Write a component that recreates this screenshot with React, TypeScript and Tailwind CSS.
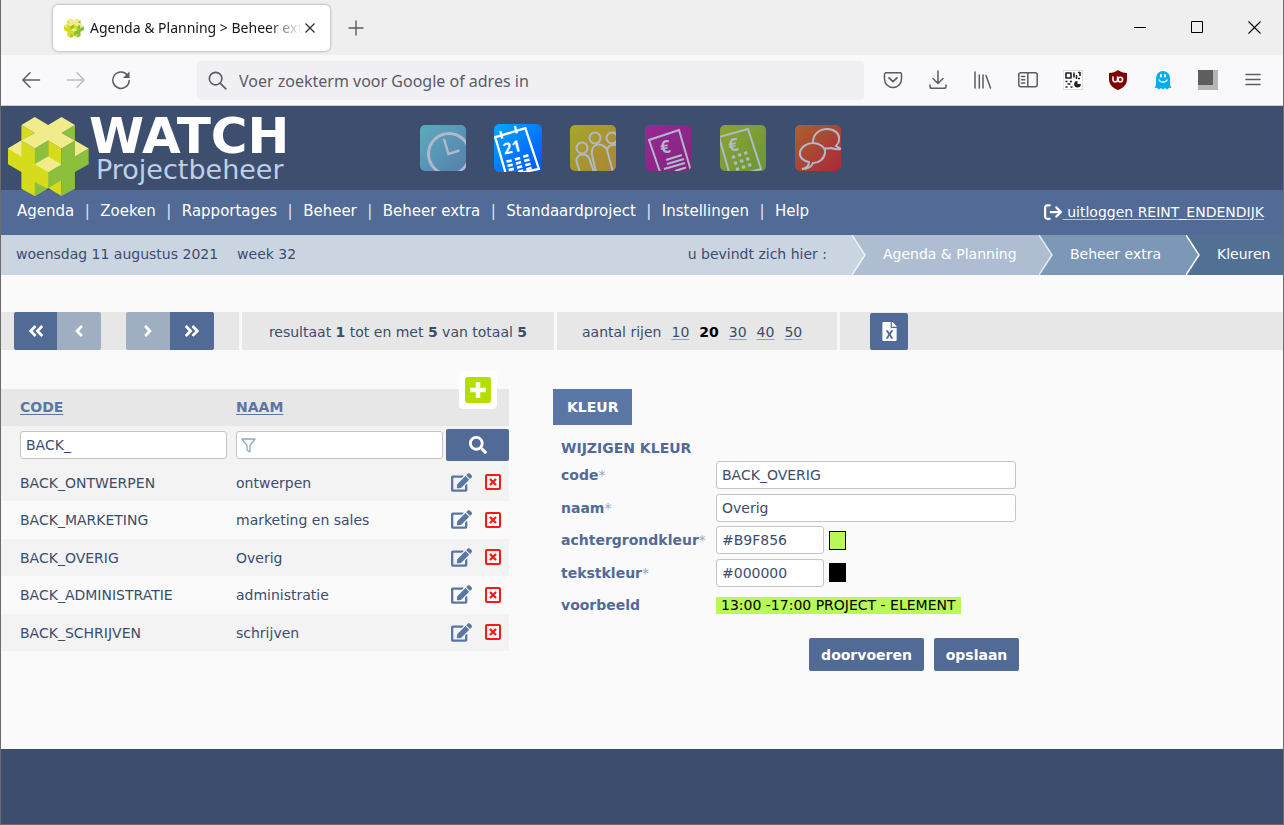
import { useState } from "react";
import type { ReactNode } from "react";
import {
  FaAngleDoubleLeft,
  FaAngleDoubleRight,
  FaAngleLeft,
  FaAngleRight,
  FaEdit,
  FaFileExcel,
  FaSearch,
} from "react-icons/fa";
import { FaArrowRightFromBracket } from "react-icons/fa6";

const menu = [
  "Agenda",
  "Zoeken",
  "Rapportages",
  "Beheer",
  "Beheer extra",
  "Standaardproject",
  "Instellingen",
  "Help",
];

const kleuren = [
  { code: "BACK_ONTWERPEN", naam: "ontwerpen" },
  { code: "BACK_MARKETING", naam: "marketing en sales" },
  { code: "BACK_OVERIG", naam: "Overig" },
  { code: "BACK_ADMINISTRATIE", naam: "administratie" },
  { code: "BACK_SCHRIJVEN", naam: "schrijven" },
];

const inputClass =
  "border border-[#c4c4c4] rounded-[3px] bg-white text-[#3b4d6d] px-[5px] h-7 leading-5 outline-none focus:border-[#5976a4]";

function Logo({ className }: { className?: string }) {
  return (
    <svg viewBox="24 36 242 236" className={className} aria-hidden="true">
      <path
        fill="#d6dc1c"
        d="M24 130 64 106 104 130 144 154 144 106 184 130 184 272 144 248 104 272 64 250 64 200 24 177ZM64 60 104 84 64 108Z"
      />
      <path
        fill="#8cbf3c"
        d="M104 130 144 106 144 154 104 177ZM184 130 224 106 224 154 265 130 265 177 224 200 224 250 184 272ZM184 177 184 225 144 248 144 200ZM224 60 184 84 224 106ZM104 230 142 250 104 272Z"
      />
      <path
        fill="#f0ec8c"
        d="M104 36 144 60 184 36 224 60 184 84 224 106 184 130 144 106 104 130 64 106 104 84 64 60ZM24 130 64 106 64 154ZM224 106 265 130 224 154ZM104 177 144 154 184 177 144 200Z"
      />
    </svg>
  );
}

function ToolButton({ label, children }: { label: string; children: ReactNode }) {
  return (
    <button aria-label={label} className="w-[45px] h-9 flex items-center justify-center shrink-0">
      <svg
        viewBox="0 0 20 20"
        className="w-5 h-5"
        fill="none"
        stroke="#5b5b66"
        strokeWidth="1.5"
        strokeLinecap="round"
        strokeLinejoin="round"
      >
        {children}
      </svg>
    </button>
  );
}

function Browser() {
  return (
    <>
      <div className="h-[55px] bg-[#efefef] flex items-center pl-[52px] font-['Noto_Sans','Open_Sans',sans-serif]">
        <div className="w-[277px] h-[46px] bg-white rounded-[5px] shadow-[0_0_3px_#90909c] flex items-center pl-[11px] pr-3 text-[14px] text-[#15141a]">
          <Logo className="w-5 h-5 shrink-0" />
          <span className="ml-[6px] pt-px flex-1 whitespace-nowrap overflow-hidden [mask-image:linear-gradient(to_right,black_84%,transparent)]">
            Agenda &amp; Planning &gt; Beheer extra
          </span>
          <button aria-label="Tabblad sluiten" className="w-4 h-4 flex items-center justify-center">
            <svg viewBox="0 0 10 10" className="w-[10px] h-[10px]" stroke="#2b2a33" strokeWidth="1.2">
              <path d="M.5.5l9 9M9.5.5l-9 9" />
            </svg>
          </button>
        </div>
        <button aria-label="Nieuw tabblad" className="ml-[18px] w-4 h-4">
          <svg viewBox="0 0 16 16" className="w-4 h-4" stroke="#5b5b66" strokeWidth="1.4">
            <path d="M8 .5v15M.5 8h15" />
          </svg>
        </button>
        <div className="ml-auto flex">
          <button aria-label="Minimaliseren" className="w-[57px] h-8 flex items-center justify-center">
            <svg viewBox="0 0 13 13" className="w-[13px] h-[13px]" stroke="#000">
              <path d="M0 6.500h12" />
            </svg>
          </button>
          <button aria-label="Maximaliseren" className="w-[57px] h-8 flex items-center justify-center">
            <svg viewBox="0 0 13 13" className="w-[13px] h-[13px]" stroke="#000" fill="none">
              <path d="M.5.5h11v11H.5z" />
            </svg>
          </button>
          <button aria-label="Sluiten" className="w-[57px] h-8 flex items-center justify-center">
            <svg viewBox="0 0 13 13" className="w-[13px] h-[13px]" stroke="#000" strokeWidth="1.1">
              <path d="M.5.5l12 12M12.500.5l-12 12" />
            </svg>
          </button>
        </div>
      </div>

      <div className="h-[51px] bg-[#f9f9fb] border-b border-[#ccccd0] flex items-center pl-[7px] pr-2">
        <ToolButton label="Terug">
          <path d="M18.500 10H2M9 2.800 1.800 10 9 17.200" />
        </ToolButton>
        <ToolButton label="Vooruit">
          <path stroke="#bcbcc2" d="M1.500 10H18M11 2.800 18.200 10 11 17.200" />
        </ToolButton>
        <ToolButton label="Vernieuwen">
          <path d="M16.500 5.200A8.200 8.200 0 1 0 18.200 10.500" />
          <path fill="#5b5b66" stroke="none" d="M18.500 1.500v6.500H12z" />
        </ToolButton>
        <label className="ml-[54px] mr-[6px] flex-1 h-[39px] bg-[#f0f0f4] rounded-[4px] flex items-center pl-[11px]">
          <svg viewBox="0 0 20 20" className="w-[19px] h-[19px]" fill="none" stroke="#5b5b66" strokeWidth="1.7" strokeLinecap="round">
            <circle cx="8" cy="8" r="6.600" />
            <path d="M13 13l5.800 5.800" />
          </svg>
          <input
            aria-label="Adres"
            placeholder="Voer zoekterm voor Google of adres in"
            className="ml-3 pt-[2px] flex-1 bg-transparent outline-none text-base placeholder:text-[#5b5b66] font-['Noto_Sans','Open_Sans',sans-serif]"
          />
        </label>
        <ToolButton label="Pocket">
          <path d="M3 2.800h14a1.500 1.500 0 0 1 1.500 1.500V9a8.500 8.500 0 0 1-17 0V4.300A1.500 1.500 0 0 1 3 2.800z" />
          <path strokeWidth="1.800" d="M6 7.800l4 3.800 4-3.800" />
        </ToolButton>
        <ToolButton label="Downloads">
          <path d="M10 1v12M5 8.500l5 5 5-5M2 15v1.500A1.800 1.800 0 0 0 3.800 18.300h12.400A1.800 1.800 0 0 0 18 16.500V15" />
        </ToolButton>
        <ToolButton label="Bibliotheek">
          <path d="M2 2v16M6.300 5v13M10 5v13M13 5.500l4.500 12.500" />
        </ToolButton>
        <ToolButton label="Zijbalk">
          <rect x=".8" y="2.800" width="18.400" height="14" rx="2" />
          <path d="M9.800 3v13.500M3.500 6.500h3.200M3.500 9.800h3.200M3.500 13h3.200" />
        </ToolButton>
        <ToolButton label="QR-code">
          <rect x=".5" y=".5" width="19" height="19" fill="#fff" stroke="#dcdcdc" strokeWidth="1" />
          <path stroke="#222" strokeWidth="1.600" strokeLinecap="butt" d="M3 3h5v5H3zM11 2.500v5M13.500 5v4M17 2v4M15 8.500h2M2.500 11.500h2M7 11.500h2M4.500 14h3M2.500 17h2M7.500 17h2M15 2.500h2" />
          <circle cx="14.500" cy="14.300" r="3.300" fill="#222" stroke="none" />
          <path d="M14.500 14V10.500h4V14z" fill="#fff" stroke="none" />
        </ToolButton>
        <ToolButton label="uBlock Origin">
          <path fill="#800000" stroke="none" d="M10 0c2.500 2 5.500 2.800 9 3v6c0 6-4 9-9 11C5 18 1 15 1 9V3c3.500-.2 6.500-1 9-3z" />
          <path stroke="#fff" strokeWidth="1.600" d="M5 7v2.500a2.300 2.300 0 0 0 4.600 0V7" />
          <circle cx="12.300" cy="9.500" r="2.300" stroke="#fff" strokeWidth="1.600" />
        </ToolButton>
        <ToolButton label="Ghostery">
          <path fill="#00aef0" stroke="none" d="M3 8a7 7 0 0 1 14 0v7l1.500 3-2.500-.2-1.800 1.800-2.200-1.700L10 19.600 8 17.900l-2.200 1.700L4 17.800 1.500 18 3 15z" />
          <path stroke="#fff" strokeWidth="2" d="M8 5v1.500M12 5v1.500" />
          <path stroke="#fff" d="M6 10c1.500 3 6.500 3 8 0" />
        </ToolButton>
        <ToolButton label="Extensie">
          <path fill="#b5b5b5" stroke="none" d="M0 0h20v20H0z" />
          <path fill="#5e5e5e" stroke="none" d="M0 0h15v15H0z" />
        </ToolButton>
        <ToolButton label="Menu">
          <path d="M3 4.500h14M3 9.500h14M3 14.500h14" />
        </ToolButton>
      </div>
    </>
  );
}

// App tiles in the header; the inactive ones are dimmed
function ModuleIcon({ label, from, to, active, children }: { label: string; from: string; to: string; active?: boolean; children: ReactNode }) {
  const id = "tile-" + label.toLowerCase();
  return (
    <button aria-label={label} className="w-[75px] h-12 flex items-center justify-center">
      <svg
        viewBox="0 0 46 46"
        className={active ? "w-12 h-12" : "w-[46px] h-[46px] opacity-75"}
        fill="none"
        stroke={active ? "#fff" : "#d8dcea"}
        strokeWidth="2"
      >
        <defs>
          <linearGradient id={id} x1="0" y1="0" x2="1" y2="1">
            <stop offset="0" stopColor={from} />
            <stop offset="1" stopColor={to} />
          </linearGradient>
          <clipPath id={id + "-clip"}>
            <rect width="46" height="46" rx="5" />
          </clipPath>
        </defs>
        <g clipPath={`url(#${id}-clip)`}>
          <rect width="46" height="46" fill={`url(#${id})`} stroke="none" />
          {children}
        </g>
      </svg>
    </button>
  );
}

function Header() {
  return (
    <header className="h-[84px] bg-[#3d4e6f] flex items-start relative z-10 pl-[7px]">
      <Logo className="w-[81px] h-[79px] mt-[11px] shrink-0" />
      <div className="mt-3 w-[316px] shrink-0">
        <div className="text-[50px] leading-[37px] font-bold text-white">WATCH</div>
        <div className="text-[27px] leading-[29px] text-[#bfd0e6] pl-[7px]">Projectbeheer</div>
      </div>
      <div className="flex mt-[18px]">
        <ModuleIcon label="Uren" from="#66ccd6" to="#6090c4">
          <circle cx="29" cy="29" r="20.500" strokeWidth="3" />
          <path strokeWidth="2.500" d="M24 14l4.500 15 11-3.500" />
        </ModuleIcon>
        <ModuleIcon label="Agenda" from="#00aaff" to="#0050ff" active>
          <path strokeWidth="2.200" d="M0 13 30 4 43 43 11 50M1 12l11 38M6 7l2 7M20 2l2 7" />
          <text x="9" y="28" transform="rotate(-14 16 24)" fontSize="15" fontWeight="bold" fill="#fff" stroke="none" fontFamily="Open Sans, sans-serif">
            21
          </text>
          <path strokeWidth="2.500" d="M12 36l5-1M20 34l5-1.500M28 31.500l5-1.500M13 40l5-1M21 38l5-1.500M29 35.500l5-1.500M14 44l5-1M22 42l5-1.500M30 39.500l5-1.500M23 46l5-1.500M31 43.500l5-1.500" />
        </ModuleIcon>
        <ModuleIcon label="Relaties" from="#c8c414" to="#d09820">
          <circle cx="12" cy="23" r="5.500" />
          <circle cx="25" cy="13" r="5.500" />
          <circle cx="42" cy="13" r="5.500" />
          <path d="M10 47 7 38C4 29 16 27 19 33l5 14M26 47l-4-17c-2-12 11-14 15-5l6 22M37 25c1-4 4-6 10-5" />
        </ModuleIcon>
        <ModuleIcon label="Facturen" from="#bc1aa0" to="#981884">
          <path d="M15 47 4 15 34 5l12 41" />
          <text x="15" y="28" transform="rotate(-10 22 22)" fontSize="18" fontWeight="bold" fill="#d8dcea" stroke="none" fontFamily="Open Sans, sans-serif">
            €
          </text>
          <path strokeWidth="2.300" d="M21 35l16-5M22 39l17-5M19 44l21-6M30 46l11-3.500" />
        </ModuleIcon>
        <ModuleIcon label="Financieel" from="#a8c020" to="#78b020">
          <path d="M9 47-1 12 28 4l13 40-22 6" />
          <text x="8" y="26" transform="rotate(-10 14 20)" fontSize="18" fontWeight="bold" fill="#d8dcea" stroke="none" fontFamily="Open Sans, sans-serif">
            €
          </text>
          <path strokeWidth="3.200" strokeDasharray="3.200 3.200" d="M12 32.500 29 27M14 38.500 31 33M16 44.500 33 39" />
        </ModuleIcon>
        <ModuleIcon label="Berichten" from="#d06818" to="#d01c28">
          <path d="M18 17C18 9 25 4 32 4s13 4 12 11c0 3-2 5-3 6l5 3c-4 1-7 0-10-1-2 0-4 1-6 0" />
          <path d="M14 37C8 36 4 32 5 27S12 18 18 18s13 4 12 10-6 10-12 10c-1 3-3 6-11 6 5-1 7-4 7-7z" />
        </ModuleIcon>
      </div>
    </header>
  );
}

function Crumb({ className, prev, line, children }: { className: string; prev: string; line: string; children: ReactNode }) {
  return (
    <li className={"flex items-center h-10 text-white " + className}>
      <svg viewBox="0 0 14 40" className="w-[14px] h-10 mr-[17px] shrink-0">
        <path d="M0 0 13 20 0 40z" fill={prev} />
        <path d="M0 0 13 20 0 40" fill="none" stroke={line} strokeWidth="1.500" />
      </svg>
      <a href="#" className="pb-[2px] whitespace-nowrap">{children}</a>
    </li>
  );
}

function Navigation() {
  return (
    <>
      <nav className="h-[45px] bg-[#526a96] text-white text-[15px] flex items-center pl-4 pr-[19px] pb-[2px]">
        <ul className="flex whitespace-nowrap">
          {menu.map((item, i) => (
            <li key={item} className="flex items-center">
              {i > 0 && <span className="w-[26px] text-center text-[#dfe5f0]">|</span>}
              <a href="#">{item}</a>
            </li>
          ))}
        </ul>
        <a href="#" className="ml-auto flex items-center text-sm whitespace-nowrap">
          <FaArrowRightFromBracket className="w-[18px] h-[18px] mr-px" />
          <span className="underline underline-offset-2 decoration-[#b9c6dc] whitespace-pre"> uitloggen REINT_ENDENDIJK</span>
        </a>
      </nav>
      <div className="h-10 bg-[#cbd4e1] flex items-center pl-[15px]">
        <span className="pb-[2px]">woensdag 11 augustus 2021</span>
        <span className="pb-[2px] ml-[19px]">week 32</span>
        <span className="pb-[2px] ml-auto mr-[25px]">u bevindt zich hier :</span>
        <ol className="flex">
          <Crumb className="w-[187px] bg-[#aebdd1]" prev="#cbd4e1" line="#eef2f7">Agenda &amp; Planning</Crumb>
          <Crumb className="w-[147px] bg-[#7d97b7]" prev="#aebdd1" line="#e2e9f1">Beheer extra</Crumb>
          <Crumb className="w-[97px] bg-[#527094]" prev="#7d97b7" line="#ffffff">Kleuren</Crumb>
        </ol>
      </div>
    </>
  );
}

function Pager() {
  const [rows, setRows] = useState(20);
  return (
    <div className="mt-[37px] h-[38px] bg-[#e7e7e7] flex items-stretch">
      <div className="w-[238px] pl-[13px] flex text-white text-lg">
        <button aria-label="Eerste" className="w-[43px] bg-[#526a96] rounded-l-[2px] flex items-center justify-center">
          <FaAngleDoubleLeft />
        </button>
        <button aria-label="Vorige" className="w-11 bg-[#9fafc1] rounded-r-[2px] flex items-center justify-center">
          <FaAngleLeft />
        </button>
        <button aria-label="Volgende" className="ml-[25px] w-11 bg-[#9fafc1] rounded-l-[2px] flex items-center justify-center">
          <FaAngleRight />
        </button>
        <button aria-label="Laatste" className="w-11 bg-[#526a96] rounded-r-[2px] flex items-center justify-center">
          <FaAngleDoubleRight />
        </button>
      </div>
      <div className="w-[315px] border-l-3 border-[#f8f8f8] flex items-center justify-center whitespace-pre pt-[2px]">
        resultaat <b>1</b> tot en met <b>5</b> van totaal <b>5</b>
      </div>
      <div className="w-[286px] border-x-3 border-[#f8f8f8] flex items-center pl-[25px] gap-[10px] pt-[2px]">
        <span>aantal rijen</span>
        {[10, 20, 30, 40, 50].map((n) => (
          <button
            key={n}
            onClick={() => setRows(n)}
            className={n === rows ? "font-bold text-black" : "underline underline-offset-2 decoration-[#8fa3c0]"}
          >
            {n}
          </button>
        ))}
      </div>
      <button aria-label="Exporteren naar Excel" className="ml-[30px] w-[38px] mt-px bg-[#526a96] rounded-[2px] text-white flex items-center justify-center">
        <FaFileExcel className="w-[19px] h-[19px]" />
      </button>
    </div>
  );
}

function ColorTable() {
  return (
    <section className="relative w-[508px] shrink-0">
      <table className="w-full table-fixed border-collapse text-left">
        <colgroup>
          <col className="w-[235px]" />
          <col className="w-[210px]" />
          <col className="w-[63px]" />
        </colgroup>
        <thead>
          <tr className="h-[37px] bg-[#e7e7e7] text-[#5976a4]">
            <th className="p-0 pb-px pl-[19px]"><a href="#" className="underline underline-offset-2">CODE</a></th>
            <th className="p-0 pb-px"><a href="#" className="underline underline-offset-2">NAAM</a></th>
            <th className="p-0" />
          </tr>
          <tr className="h-[38px] bg-[#f3f3f3]">
            <td className="p-0 pl-[19px]">
              <input aria-label="Filter code" defaultValue="BACK_" className={inputClass + " w-[207px] block"} />
            </td>
            <td className="p-0">
              <label className="relative block">
                <input aria-label="Filter naam" className={inputClass + " w-[207px] block pl-6"} />
                <svg viewBox="0 0 15 15" className="absolute left-[5px] top-[7px] w-[15px] h-[15px]" fill="none" stroke="#93a8c2" strokeWidth="1.300" strokeLinejoin="round">
                  <path d="M1 1h13L9 7.500V14l-3-2V7.500z" />
                </svg>
              </label>
            </td>
            <td className="p-0">
              <button aria-label="Zoeken" className="w-full h-8 bg-[#526a96] rounded-[2px] text-white flex items-center justify-center">
                <FaSearch className="w-[18px] h-[18px]" />
              </button>
            </td>
          </tr>
        </thead>
        <tbody>
          {kleuren.map((k) => (
            <tr key={k.code} className="h-[37px] even:h-[38px] odd:bg-[#f3f3f3]">
              <td className="p-0 pl-[19px]">{k.code}</td>
              <td className="p-0">{k.naam}</td>
              <td className="p-0 pb-px">
                <div className="flex items-center pl-[5px] gap-[13px]">
                  <button aria-label={"Wijzig " + k.code}>
                    <FaEdit className="w-[21px] h-[19px] text-[#5976a4]" />
                  </button>
                  <button aria-label={"Verwijder " + k.code}>
                    <svg viewBox="0 0 16 16" className="w-4 h-4" fill="none" stroke="#f81818">
                      <rect x="1" y="1" width="14" height="14" rx="1" strokeWidth="2" />
                      <path strokeWidth="2.200" d="M5 5l6 6M11 5l-6 6" />
                    </svg>
                  </button>
                </div>
              </td>
            </tr>
          ))}
        </tbody>
      </table>
      <button
        aria-label="Toevoegen"
        className="absolute right-3 -top-[18px] w-[38px] h-[38px] rounded-[4px] bg-white flex items-center justify-center"
      >
        <span className="w-[26px] h-[26px] rounded-[3px] bg-[#b3de00] flex items-center justify-center">
          <svg viewBox="0 0 18 18" className="w-[18px] h-[18px]" stroke="#fff" strokeWidth="4.500">
            <path d="M9 1v16M1 9h16" />
          </svg>
        </span>
      </button>
    </section>
  );
}

function Field({ id, label, required, children }: { id: string; label: string; required?: boolean; children: ReactNode }) {
  return (
    <div className="flex items-center h-8 even:h-[33px]">
      <label htmlFor={id} className="w-[155px] font-bold text-[#526a96]">
        {label}
        {required && <span className="font-normal text-[#93a8c2]">*</span>}
      </label>
      {children}
    </div>
  );
}

function ColorForm() {
  const [back, setBack] = useState("#B9F856");
  const [text, setText] = useState("#000000");

  return (
    <section className="ml-11 w-[466px] shrink-0">
      <h2 className="inline-flex items-center h-9 px-[14px] bg-[#5976a4] text-white font-bold">KLEUR</h2>
      <form className="pl-2" onSubmit={(e) => e.preventDefault()}>
        <h3 className="mt-[13px] h-[21px] leading-5 font-bold text-[#526a96]">WIJZIGEN KLEUR</h3>
        <div>
          <Field id="code" label="code" required>
            <input id="code" defaultValue="BACK_OVERIG" className={inputClass + " w-[300px]"} />
          </Field>
          <Field id="naam" label="naam" required>
            <input id="naam" defaultValue="Overig" className={inputClass + " w-[300px]"} />
          </Field>
          <Field id="achtergrond" label="achtergrondkleur" required>
            <input id="achtergrond" value={back} onChange={(e) => setBack(e.target.value)} className={inputClass + " w-[108px]"} />
            <span className="ml-[5px] w-[17px] h-[19px] border border-black" style={{ backgroundColor: back }} />
          </Field>
          <Field id="tekst" label="tekstkleur" required>
            <input id="tekst" value={text} onChange={(e) => setText(e.target.value)} className={inputClass + " w-[108px]"} />
            <span className="ml-[5px] w-[17px] h-[19px] border border-black" style={{ backgroundColor: text }} />
          </Field>
          <Field id="voorbeeld" label="voorbeeld">
            <output id="voorbeeld" className="px-[5px] leading-[17px]" style={{ backgroundColor: back, color: text }}>
              13:00 -17:00 PROJECT - ELEMENT
            </output>
          </Field>
        </div>
        <div className="mt-[17px] flex justify-end gap-[10px]">
          <button className="h-[33px] w-[115px] bg-[#526a96] rounded-[2px] text-white font-bold">doorvoeren</button>
          <button className="h-[33px] w-[85px] bg-[#526a96] rounded-[2px] text-white font-bold">opslaan</button>
        </div>
      </form>
    </section>
  );
}

export default function App() {
  return (
    <div className="min-h-screen flex flex-col bg-[#fafafa] border-x border-b border-[#6b6b6b] text-sm text-[#3b4d6d] font-['DejaVu_Sans',sans-serif]">
      <Browser />
      <Header />
      <Navigation />
      <main className="flex-1 pb-[78px]">
        <Pager />
        <div className="mt-[39px] flex items-start">
          <ColorTable />
          <ColorForm />
        </div>
      </main>
      <footer className="h-[75px] bg-[#3c4d6e]" />
    </div>
  );
}
